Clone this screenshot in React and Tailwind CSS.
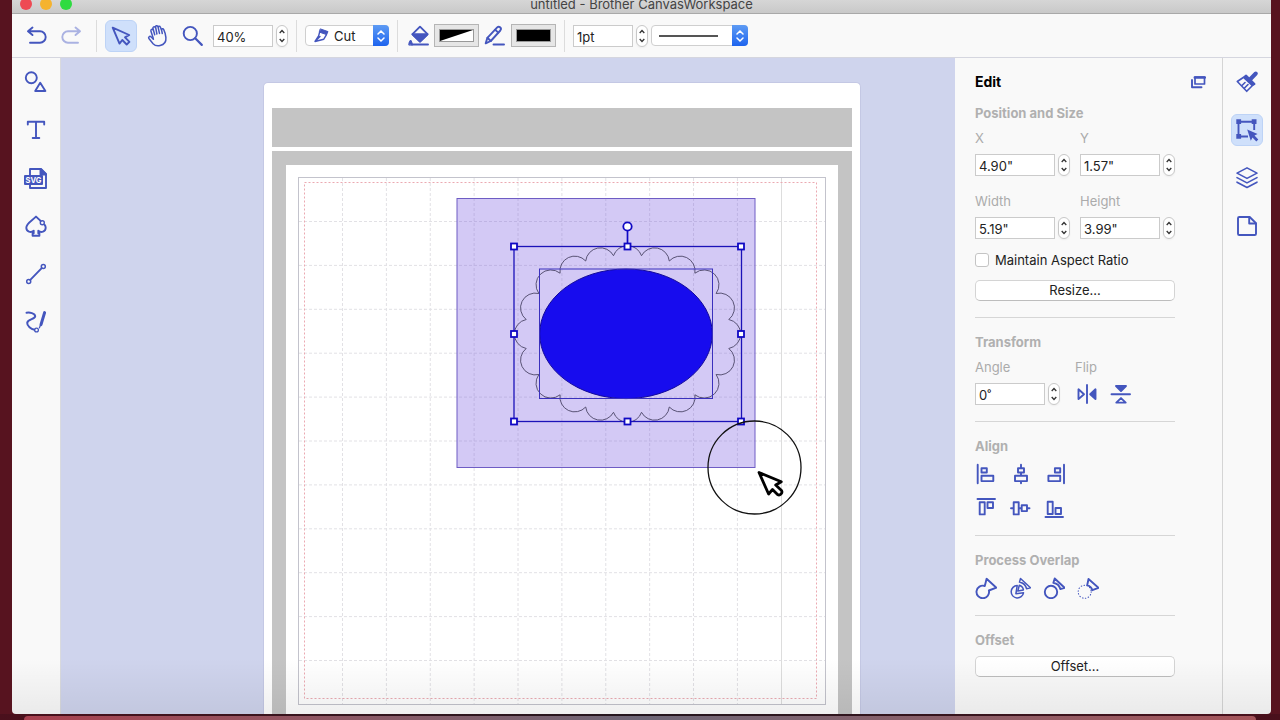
import React, { useState } from "react";

const Icon = ({ size = 24, children, className = "" }) => (
  <svg
    width={size}
    height={size}
    viewBox={`0 0 ${size} ${size}`}
    fill="none"
    stroke="currentColor"
    strokeWidth="1.9"
    strokeLinecap="round"
    strokeLinejoin="round"
    className={`shrink-0 ${className}`}
    aria-hidden="true"
  >
    {children}
  </svg>
);

const ToolButton = ({ label, active, disabled, children }) => (
  <button
    type="button"
    aria-label={label}
    disabled={disabled}
    className={`flex size-8 shrink-0 items-center justify-center rounded-md border ${
      active ? "border-[#bdd3f6] bg-[#cfe0fb]" : "border-transparent"
    } ${disabled ? "text-[#aab2e2]" : "text-[#4456be]"}`}
  >
    <Icon>{children}</Icon>
  </button>
);

const SmallButton = ({ label, children }) => (
  <button type="button" aria-label={label} className="size-[22px] text-[#4456be]">
    <Icon size={22}>{children}</Icon>
  </button>
);

const NumberBox = ({ id, label, value, width }) => {
  const [text, setText] = useState(value);

  const step = (delta) => {
    const unit = text.replace(/^[\d.]+/, "");
    const digits = unit === '"' ? 2 : 0;
    const next = parseFloat(text) + delta * (digits ? 0.01 : 1);
    setText(next.toFixed(digits) + unit);
  };

  return (
    <div className="flex items-center gap-[3px]">
      <input
        id={id}
        aria-label={label}
        value={text}
        onChange={(e) => setText(e.target.value)}
        className={`h-[22px] border border-[#cbcbcb] bg-white pt-0.5 pl-[3px] text-[13px] text-[#222] outline-none ${width}`}
      />
      <div className="flex h-[22px] w-3 flex-col rounded-full border border-[#c8c8c8] bg-white text-[#333] shadow-xs">
        <button type="button" aria-label="Increase" onClick={() => step(1)} className="flex flex-1 items-end justify-center">
          <svg width="6" height="8" viewBox="0 0 6 8" fill="none" stroke="currentColor" strokeWidth="1.3">
            <path d="M0.7 5 3 2.5 5.3 5" />
          </svg>
        </button>
        <button type="button" aria-label="Decrease" onClick={() => step(-1)} className="flex flex-1 items-start justify-center">
          <svg width="6" height="8" viewBox="0 0 6 8" fill="none" stroke="currentColor" strokeWidth="1.3">
            <path d="M0.7 3 3 5.5 5.3 3" />
          </svg>
        </button>
      </div>
    </div>
  );
};

const Field = ({ id, label, value, width }) => (
  <div>
    <label htmlFor={id} className="mb-1.5 block text-[#ababab]">
      {label}
    </label>
    <NumberBox id={id} value={value} width={width} />
  </div>
);

const SelectArrows = () => (
  <span className="pointer-events-none absolute inset-y-0 right-0 flex w-4 items-center justify-center rounded-r bg-linear-to-b from-[#5e9bf4] to-[#1d63ee]">
    <svg width="8" height="14" viewBox="0 0 8 14" fill="none" stroke="#fff" strokeWidth="1.5" strokeLinecap="round">
      <path d="M1 5 4 2l3 3M1 9l3 3 3-3" />
    </svg>
  </span>
);

const Separator = () => <div className="mx-2 h-8 w-px bg-[#dcdcdc]" />;

const Section = ({ title, children }) => (
  <section className="w-[200px] border-b border-[#d6d6d6] pb-4 last:border-b-0">
    <h3 className="font-bold text-[#b0b0b0]">{title}</h3>
    {children}
  </section>
);

const PushButton = ({ children }) => (
  <button
    type="button"
    className="block h-[21px] w-full rounded-[5px] border border-[#d4d4d4] border-b-[#bdbdbd] bg-white leading-[19px] text-[#222]"
  >
    {children}
  </button>
);

const TitleBar = () => (
  <header className="h-3.5 overflow-hidden border-b border-[#a9a9a9] bg-linear-to-b from-[#d6d6d6] to-[#c9c9c9]">
    <div className="grid grid-cols-[1fr_auto_1fr] grid-rows-[7px] items-center">
      <div className="flex gap-2 pl-2">
        <span className="size-3 rounded-full bg-[#ee4a54]" />
        <span className="size-3 rounded-full bg-[#f5b32f]" />
        <span className="size-3 rounded-full bg-[#2fdb41]" />
      </div>
      <h1 className="text-[13px] leading-4 text-[#444]">untitled - Brother CanvasWorkspace</h1>
    </div>
  </header>
);

const Toolbar = () => (
  <div className="flex h-11 items-center border-b border-[#d5d6df] pl-2">
    <div className="flex items-center gap-1">
      <ToolButton label="Undo">
        <path d="M8.5 3.5 4 7.3l4.5 3.8M4.3 7.3H16a5.7 5.7 0 0 1 0 11.4H6" />
      </ToolButton>
      <ToolButton label="Redo" disabled>
        <path d="M15.5 3.5 20 7.3l-4.5 3.8M19.7 7.3H8a5.7 5.7 0 0 0 0 11.4h10" />
      </ToolButton>
    </div>
    <Separator />
    <div className="flex items-center gap-1">
      <ToolButton label="Select" active>
        <path d="M3.7 3.7 20.2 11l-4.2 2.4 4.4 4.5-2.7 2.6-4.4-4.5-2.8 3.6z" />
      </ToolButton>
      <ToolButton label="Pan">
        <g strokeWidth="1.5">
          <path d="M8.4 15.2 6 12.8c-1.3-1.1-3 .3-2.1 1.7l4.2 5.2c2 2.1 4.5 2.4 7 1.8 3.9-.9 6.2-4 5.8-8l-.7-3.9-1.5-4.1c-.6-1.3-2.4-.9-2.1.6l.7 3.4" />
          <path d="M16.5 5.9 15.3 3c-.6-1.3-2.4-.8-2.1.6l1.3 5.8M13.2 3.4l-.4-1c-.7-1.2-2.5-.7-2.2.8l1.3 6.8M10.7 4.2l-.4-.8c-.9-1.2-2.7-.4-2.3 1.1l1.7 6.2M8.2 5.9c-1-1.1-2.6-.3-2.3 1.1l2.4 7.4" />
        </g>
      </ToolButton>
      <ToolButton label="Zoom">
        <circle cx="9.3" cy="9.5" r="6.6" />
        <path d="m14.2 14.3 6.6 6.6" strokeWidth="2.2" />
      </ToolButton>
      <NumberBox label="Zoom level" value="40%" width="w-[60px]" />
    </div>
    <Separator />
    <div className="relative h-[21px] w-[84px] text-[#4456be]">
      <select
        aria-label="Line type"
        className="block h-full w-full appearance-none rounded border border-[#cfcfcf] bg-white pl-7 text-[13px] leading-[18px] text-[#222] outline-none"
      >
        <option>Cut</option>
        <option>Draw</option>
      </select>
      <Icon size={16} className="pointer-events-none absolute top-0.5 left-2">
        <path d="M7.6 2 15 4.6 13.6 7.6 6.6 5.2z" fill="currentColor" strokeWidth="1" />
        <path d="M6.6 5.2 5.6 9 2 14.5l8.8-2.3 2.7-4.6M2.5 14 7 9.5" strokeWidth="1.4" />
      </Icon>
      <SelectArrows />
    </div>
    <Separator />
    <div className="flex items-center gap-1 text-[#4456be]">
      <Icon>
        <path d="m14 2.7 7.5 7.5-7.5 7.3-7.5-7.3z" />
        <path d="M6.5 10.2h15L14 17.5z" fill="currentColor" />
        <path d="M6 20.5h16" />
        <path d="M2.8 20.7c0-2.5.9-3.6 1.9-4.7.6 1.1 1.6 2.8 1.8 4.7z" fill="currentColor" strokeWidth="1" />
      </Icon>
      <button type="button" aria-label="Fill color" className="flex h-[23px] w-[45px] items-center justify-center border border-[#b5b5b5] bg-[#e6e6e6]">
        <svg width="35" height="13" viewBox="0 0 35 13">
          <rect x="0.5" y="0.5" width="34" height="12" fill="#fff" stroke="#999" />
          <path d="M1 1H34L1 12Z" fill="#000" />
        </svg>
      </button>
      <Icon>
        <path d="M2.7 19.3 4.4 13.8 14.2 3.4c1-1 2.1-.8 2.9-.1.9.8 1.2 2 .2 3.2L7.8 17z" />
        <path d="m12.2 5.8 3.1 2.8M4.4 13.8 7.8 17" />
        <path d="M10.500 20.500H21" />
      </Icon>
      <button type="button" aria-label="Line color" className="flex h-[23px] w-[45px] items-center justify-center border border-[#b5b5b5] bg-[#e6e6e6]">
        <span className="h-[13px] w-[35px] border border-[#999] bg-black" />
      </button>
    </div>
    <Separator />
    <div className="flex items-center gap-[3px]">
      <NumberBox label="Line width" value="1pt" width="w-[60px]" />
      <div className="relative h-[21px] w-[97px]">
        <select
          aria-label="Line style"
          className="block h-full w-full appearance-none rounded border border-[#cfcfcf] bg-white outline-none"
        >
          <option value="solid"></option>
        </select>
        <span className="pointer-events-none absolute inset-y-0 left-2 flex w-[59px] items-center">
          <span className="h-0.5 w-full bg-[#555]" />
        </span>
        <SelectArrows />
      </div>
    </div>
  </div>
);

const LeftRail = () => (
  <nav className="flex w-[49px] shrink-0 flex-col items-center gap-4 border-r border-[#d9dade] pt-2">
    <ToolButton label="Shapes">
      <circle cx="7.3" cy="7.7" r="5.5" />
      <path d="m16.2 12.8 5.2 8.2H11.2z" />
    </ToolButton>
    <ToolButton label="Text">
      <path d="M3.8 6.5V3.8h16.4v2.7M12 3.8v16M8.7 20h6.6" />
    </ToolButton>
    <ToolButton label="Import SVG">
      <path d="M6 9V3h11l5 5v14H6v-3" />
      <path d="M16.5 3v5.5H22z" fill="currentColor" />
      <rect x="0" y="9" width="19" height="10" rx="1" fill="currentColor" stroke="none" />
      <text x="9.5" y="16.700" fontSize="7.500" fontWeight="700" fontFamily="Inter, sans-serif" textAnchor="middle" fill="#fff" stroke="none">
        SVG
      </text>
    </ToolButton>
    <ToolButton label="Trace path">
      <path d="M16.6 7C15 5.4 13.4 4 12 2.6 8 6.800 2.300 9.200 2.300 13.800c0 3.900 4.600 5.300 7.400 2.900v2.500H8.600v2.600h6.800v-2.600h-1.100v-2.500c2.800 2.400 7.400 1 7.400-2.900 0-1-.4-2.100-1.200-3.100" />
      <circle cx="18.3" cy="8.700" r="2" strokeWidth="1.400" />
    </ToolButton>
    <ToolButton label="Line">
      <circle cx="4.700" cy="19.400" r="2" strokeWidth="1.500" />
      <circle cx="19.300" cy="4.600" r="2" strokeWidth="1.500" />
      <path d="M6.300 17.800 17.700 6.200" />
    </ToolButton>
    <ToolButton label="Freehand">
      <path d="M2.500 2.800c3-.6 8.500.3 8.700 3.500.1 3.100-7.700 2.600-8 6.600-.2 3.200 3.900 6 7.200 6.800" strokeWidth="2" />
      <circle cx="12.500" cy="20" r="1.900" strokeWidth="1.300" />
      <path d="m20.600 2.600-3.600 12" strokeWidth="3" />
      <path d="m16.800 14.600-1.400 3.200" strokeWidth="1.300" />
    </ToolButton>
  </nav>
);

const RightRail = () => (
  <nav className="flex w-[49px] shrink-0 flex-col items-center gap-4 border-l border-[#d5d5d5] pt-2">
    <ToolButton label="Properties">
      <path d="m15.500 9 5.300-5.500" strokeWidth="4" />
      <path d="m11 5.500 8.500 8.500-2.500 1L9.500 8z" fill="currentColor" />
      <path d="M10.500 6 2.300 11.500l9.400 9.800L19 14M7 15.500l3-3M9.500 18l3.500-3.500" strokeWidth="1.600" />
    </ToolButton>
    <ToolButton label="Edit" active>
      <path d="M3.500 3.700h15.700V12M3.500 3.700v14.800H13" strokeLinecap="butt" />
      <path d="M1.300 1.300h4.800v4.800H1.300zM16.700 1.300h4.800v4.800h-4.800zM1.300 16h4.800v4.800H1.300z" fill="currentColor" stroke="none" />
      <path d="m12.200 11.500 10.400 4.600-3.100 1.500 3.800 3.900-2 1.900-3.800-3.800-1.700 3.100z" fill="currentColor" stroke="none" />
    </ToolButton>
    <ToolButton label="Layers">
      <path d="m12 1.900 10 5.200-10 5.300L2 7.100zM2 11.600l10 5.300 10-5.300M2 16.200l10 5.300 10-5.300" strokeWidth="1.600" />
    </ToolButton>
    <ToolButton label="Page">
      <path d="M4.300 3h10.400l6.300 6.200v10.500a1.300 1.300 0 0 1-1.300 1.300H4.300A1.300 1.300 0 0 1 3 19.700V4.300A1.300 1.300 0 0 1 4.300 3z" />
      <path d="M14.200 3v6.500h6.600" />
    </ToolButton>
  </nav>
);

const EditPanel = () => (
  <aside className="w-[267px] shrink-0 pt-2 pl-5 text-[13px] leading-5">
    <div className="mb-[5px] flex h-8 items-center justify-between pr-4">
      <h2 className="text-sm font-bold text-black">Edit</h2>
      <button type="button" aria-label="Detach panel" className="text-[#4456be]">
        <Icon size={16}>
          <path d="M5 3h9.500v7H5z" strokeWidth="1.700" />
          <path d="M4.800 3.500h10" strokeWidth="2.500" />
          <path d="M2 6V13.300h9.500" strokeWidth="1.900" />
        </Icon>
      </button>
    </div>

    <div className="flex flex-col gap-3.5">
      <Section title="Position and Size">
        <div className="mt-[5px] grid grid-cols-[95px_95px] gap-x-2.5 gap-y-[15px]">
          <Field id="pos-x" label="X" value={'4.90"'} width="w-20" />
          <Field id="pos-y" label="Y" value={'1.57"'} width="w-20" />
          <Field id="width" label="Width" value={'5.19"'} width="w-20" />
          <Field id="height" label="Height" value={'3.99"'} width="w-20" />
        </div>
        <div className="mt-[11px] mb-2.5 flex items-center gap-1.5">
          <input
            id="aspect"
            type="checkbox"
            className="size-3.5 appearance-none rounded-[3px] border border-[#c4c4c4] bg-white checked:bg-[#1d63ee]"
          />
          <label htmlFor="aspect" className="text-[#222]">
            Maintain Aspect Ratio
          </label>
        </div>
        <PushButton>Resize...</PushButton>
      </Section>

      <Section title="Transform">
        <div className="mt-[5px] flex gap-[15px]">
          <Field id="angle" label="Angle" value="0˚" width="w-[70px]" />
          <div>
            <div className="mb-1.5 text-[#ababab]">Flip</div>
            <div className="flex gap-3">
              <SmallButton label="Flip horizontally">
                <path d="M12 2v18" />
                <path d="M3.500 6.300v9.800l5.500-4.900z" />
                <path d="M20.500 6.300v9.800l-5.300-4.900z" fill="currentColor" />
              </SmallButton>
              <SmallButton label="Flip vertically">
                <path d="M2.500 11.300h18.500" />
                <path d="M7 3h10l-5 5z" fill="currentColor" />
                <path d="M7.300 19.600h9.400l-4.700-4.500z" />
              </SmallButton>
            </div>
          </div>
        </div>
      </Section>

      <Section title="Align">
        <div className="mt-[7px] grid grid-cols-[22px_22px_22px] gap-3">
          <SmallButton label="Align left">
            <path d="M2.700 1.700v18.600M6.500 5.200h5.300v4.300H6.500zM6.500 12.800h11.800v5.300H6.500z" />
          </SmallButton>
          <SmallButton label="Align center">
            <path d="M12 1.700v3.500M12 9.500v3.300M12 18.100v2.200M9 5.200h6v4.300h-6zM6 12.800h12v5.300h-12z" />
          </SmallButton>
          <SmallButton label="Align right">
            <path d="M21 1.700v18.600M11.900 5.200h5.300v4.300h-5.300zM5.400 12.800h11.800v5.300H5.400z" />
          </SmallButton>
          <SmallButton label="Align top">
            <path d="M2.500 2h17.500M4.700 5.200h5v12.200h-5zM12.500 5.200h5.500v5.800h-5.500z" />
          </SmallButton>
          <SmallButton label="Align middle">
            <path d="M2 11.200h2.700M9.700 11.200h3M18.500 11.200h2M4.700 5.200h5v12.200h-5zM12.700 8.300h5.300v5.800h-5.300z" />
          </SmallButton>
          <SmallButton label="Align bottom">
            <path d="M2.500 20h17.500M4.700 4.800h5v12.200h-5zM12.500 11h5.500v6h-5.500z" />
          </SmallButton>
        </div>
      </Section>

      <Section title="Process Overlap">
        <div className="mt-[7px] flex gap-3">
          <SmallButton label="Weld">
            <path d="m9.800 9 1.800-7.200 9.800 8.900-7.500 2.800A6.300 6.300 0 1 1 9.800 9z" />
          </SmallButton>
          <SmallButton label="Divide">
            <g strokeWidth="1.500">
              <path d="m11.500 1.500 10 9.300-4 .9c-.6-3-3.500-5.700-7-6.600z" />
              <path d="M8.200 8.600a6.200 6.200 0 1 0 6.300 7.200l-7.600.9z" />
              <path d="M10.300 8.300c2.200.7 3.800 2.200 4.100 4.600L8.800 14z" />
            </g>
          </SmallButton>
          <SmallButton label="Subtract">
            <circle cx="8" cy="15" r="6.200" />
            <path d="m11.700 1.500 9.900 9.300-4.300 1.200c-.8-3-3.300-5.500-6.900-6.200z" />
          </SmallButton>
          <SmallButton label="Crop">
            <circle cx="7.700" cy="14.800" r="6.500" strokeWidth="1.100" strokeDasharray="0.500 2.420" />
            <path d="m11.500 2 10 8.800-6.200 2.400c-.6-2.500-2.500-4.200-5.100-5z" />
          </SmallButton>
        </div>
      </Section>

      <Section title="Offset">
        <div className="mt-1.5">
          <PushButton>Offset...</PushButton>
        </div>
      </Section>
    </div>
  </aside>
);

const gridLines = [...Array(10).keys()];

// cusps of the scalloped frame, measured from its centre
const quarter = [
  [14, -78.3],
  [41.8, -73],
  [67.4, -60.8],
  [88.6, -40.5],
  [101.3, -14.5],
];
const half = [...quarter, ...[...quarter].reverse().map(([x, y]) => [x, -y])];
const cusps = [...half, ...half.map(([x, y]) => [-x, -y])];
const scallop =
  cusps.map(([x, y], i) => `${i ? "A14.8 14.8 0 0 1" : "M"} ${627.5 + x} ${334 + y}`).join(" ") +
  ` A14.8 14.8 0 0 1 ${627.5 + cusps[0][0]} ${334 + cusps[0][1]}`;

const handles = [
  [514, 246.5],
  [627.5, 246.5],
  [741, 246.5],
  [514, 334],
  [741, 334],
  [514, 421.5],
  [627.5, 421.5],
  [741, 421.5],
];

const Drawing = () => (
  <svg width="552" height="549" viewBox="286 165 552 549" fill="none" className="block">
    <g stroke="#e2e1e5" strokeDasharray="3 2">
      {gridLines.map((i) => (
        <line key={i} x1={342.5 + i * 43.88} x2={342.5 + i * 43.88} y1="178" y2="704" />
      ))}
      {[...gridLines, 10].map((i) => (
        <line key={i} x1="299" x2="825" y1={221.5 + i * 43.9} y2={221.5 + i * 43.9} />
      ))}
    </g>
    <line x1="781.5" x2="781.5" y1="178" y2="704" stroke="#dddddd" />
    <rect x="298.5" y="177.5" width="527" height="527" stroke="#c3c3cc" />
    <rect x="304.5" y="182.5" width="512" height="516" stroke="#eba9b1" strokeDasharray="2 2" />

    <rect x="457" y="198.5" width="298" height="269" fill="#7558df" fillOpacity="0.32" stroke="#6e5cc4" />
    <path d={scallop} stroke="#4b4566" strokeWidth="0.9" />
    <ellipse cx="626" cy="333.8" rx="86.3" ry="64.8" fill="#170cee" stroke="#130a9a" />
    <rect x="539.5" y="269" width="173" height="129.5" stroke="#3a30bd" />
    <rect x="514" y="246.5" width="227.5" height="175" stroke="#1b12b8" strokeWidth="1.3" />
    <path d="M627.5 231v12" stroke="#1008c4" strokeWidth="1.7" />
    <circle cx="627.5" cy="226.5" r="4.2" fill="#fff" stroke="#1008c4" strokeWidth="1.8" />
    {handles.map(([x, y]) => (
      <rect key={`${x}-${y}`} x={x - 3} y={y - 3} width="6" height="6" fill="#fff" stroke="#1008c4" strokeWidth="1.8" />
    ))}

    <circle cx="754.5" cy="467.5" r="46.5" stroke="#111" strokeWidth="1.3" />
    <path
      d="M759 472.5 781.3 481.8 775.7 485 781.5 490.5C783 493 780 496 777.5 494.500L772.500 489.500 768.600 494z"
      fill="#fff"
      stroke="#000"
      strokeWidth="2.8"
      strokeLinejoin="round"
    />
  </svg>
);

const Canvas = () => (
  <main className="min-w-0 flex-1 overflow-hidden bg-[#cfd4ed] pt-6 pl-[202px]">
    <div className="flex h-full w-[598px] flex-col rounded-t-[5px] border border-b-0 border-[#c4c8e4] bg-white px-2 pt-[25px]">
      <div className="h-[39px] shrink-0 bg-[#c4c4c4]" />
      <div className="mt-1 flex-1 bg-[#c4c4c4] px-3.5 pt-3.5">
        <div className="h-full bg-white">
          <Drawing />
        </div>
      </div>
    </div>
  </main>
);

export default function App() {
  return (
    <div className="flex h-screen flex-col overflow-hidden bg-[#57131f] font-['Inter',sans-serif]">
      <div className="relative mr-[9px] ml-3 flex min-h-0 flex-1 flex-col overflow-hidden rounded-b bg-[#f9f9f9]">
        <TitleBar />
        <Toolbar />
        <div className="flex min-h-0 flex-1">
          <LeftRail />
          <Canvas />
          <EditPanel />
          <RightRail />
        </div>
        <div className="pointer-events-none absolute inset-x-0 bottom-0 h-14 bg-linear-to-b from-transparent to-black/6" />
      </div>
      <div className="h-1.5 shrink-0 bg-linear-to-r from-[#4a101c] via-[#24161e] to-[#4a101c] pt-0.5">
        <div className="mx-6 h-1 rounded-t bg-linear-to-r from-[#a8404f] via-[#6d6676] to-[#a5545a]" />
      </div>
    </div>
  );
}
